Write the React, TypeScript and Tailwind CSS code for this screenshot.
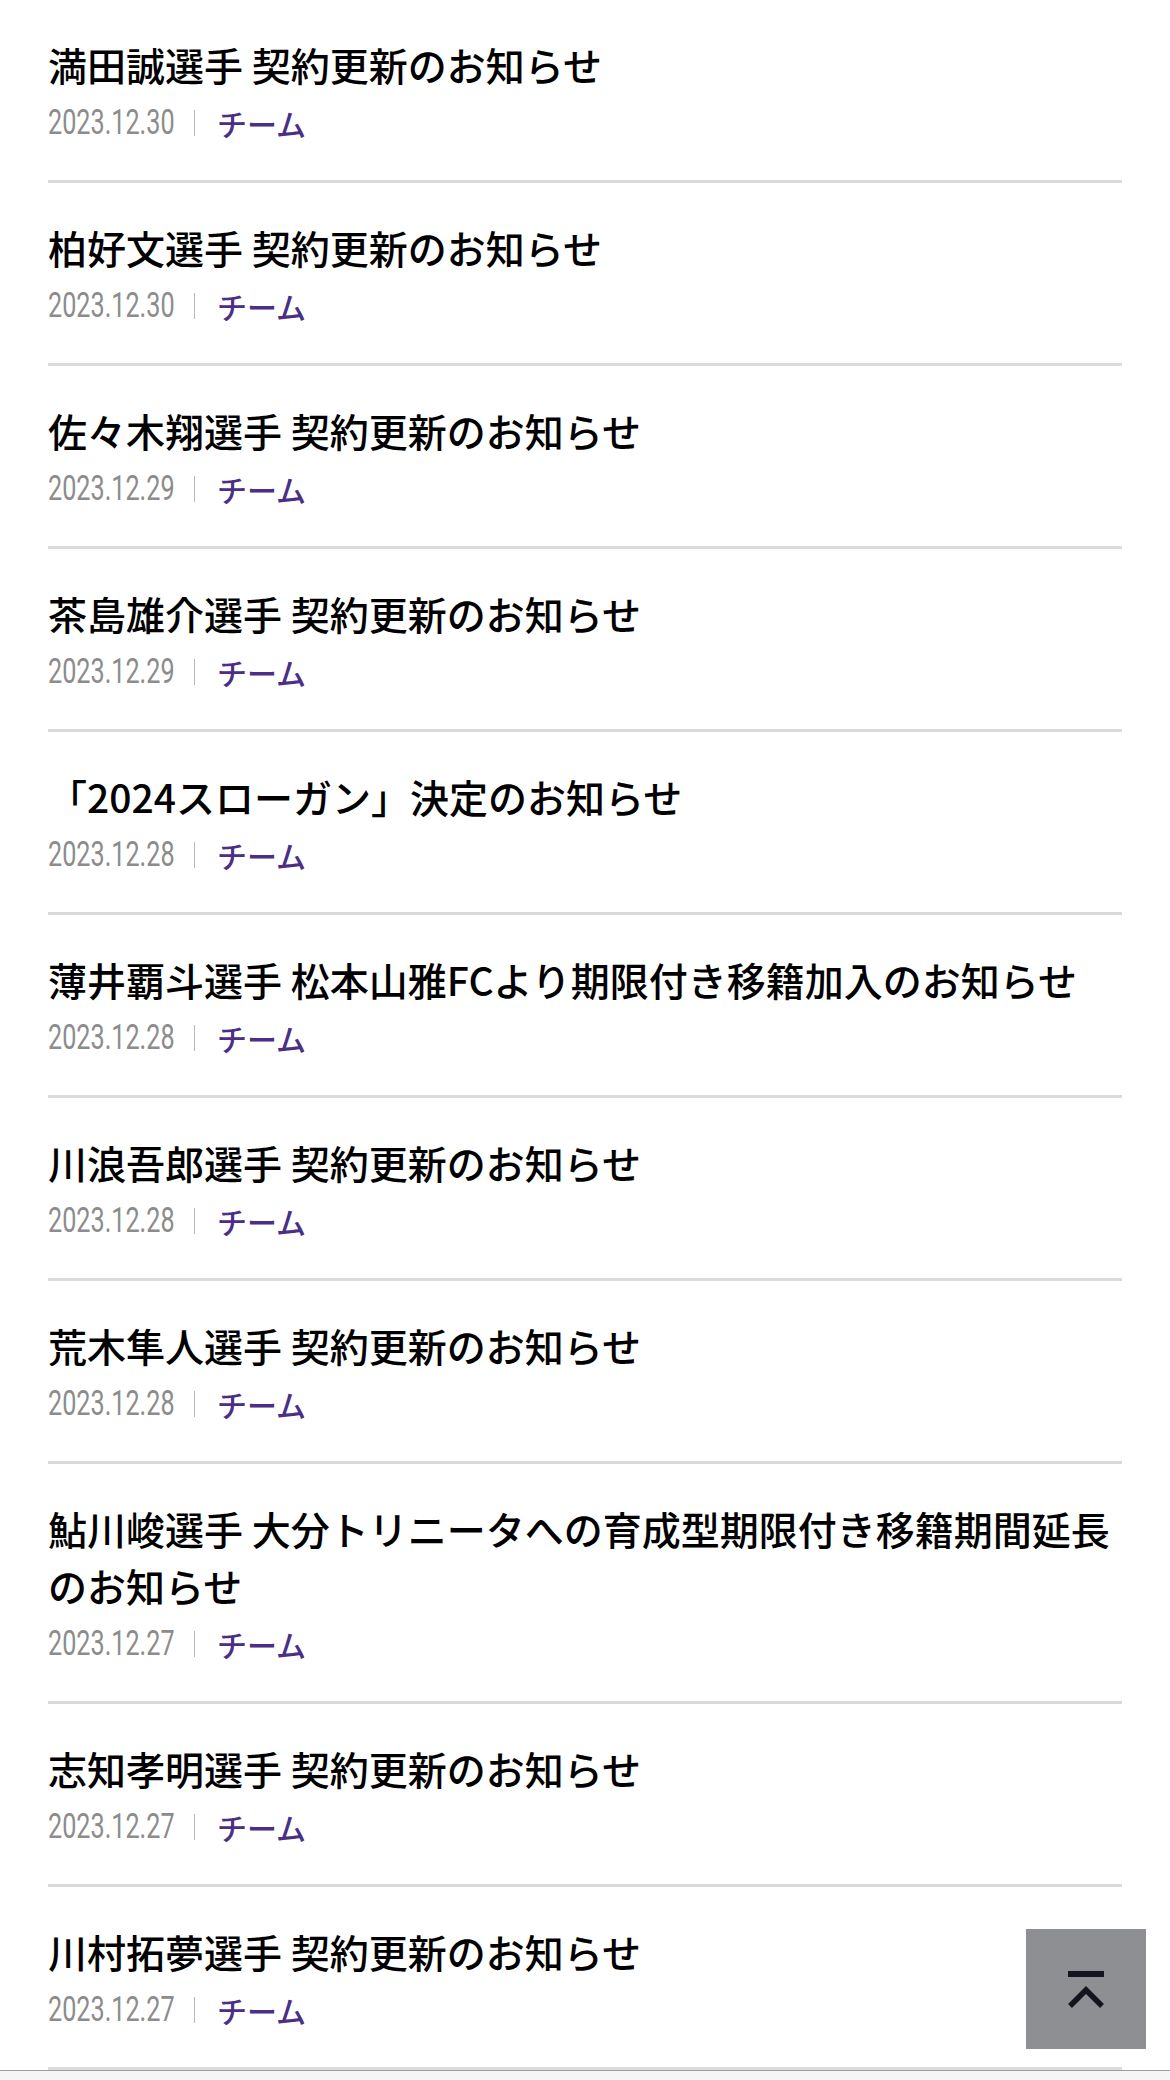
const news = [
  { title: "満田誠選手 契約更新のお知らせ", date: "2023.12.30" },
  { title: "柏好文選手 契約更新のお知らせ", date: "2023.12.30" },
  { title: "佐々木翔選手 契約更新のお知らせ", date: "2023.12.29" },
  { title: "茶島雄介選手 契約更新のお知らせ", date: "2023.12.29" },
  { title: "「2024スローガン」決定のお知らせ", date: "2023.12.28" },
  { title: "薄井覇斗選手 松本山雅FCより期限付き移籍加入のお知らせ", date: "2023.12.28" },
  { title: "川浪吾郎選手 契約更新のお知らせ", date: "2023.12.28" },
  { title: "荒木隼人選手 契約更新のお知らせ", date: "2023.12.28" },
  { title: "鮎川峻選手 大分トリニータへの育成型期限付き移籍期間延長のお知らせ", date: "2023.12.27" },
  { title: "志知孝明選手 契約更新のお知らせ", date: "2023.12.27" },
  { title: "川村拓夢選手 契約更新のお知らせ", date: "2023.12.27" },
]

const jp = "font-['Noto_Sans_CJK_JP','Noto_Sans',sans-serif]"

function NewsItem({ title, date }: { title: string; date: string }) {
  return (
    <li className="border-b-[3px] border-[#dadada] pt-[36px] pb-[36px]">
      <a href="#" className="block">
        <p className={`${jp} text-[39px] leading-[57px] font-medium text-black`}>{title}</p>
        <div className="mt-[9px] flex h-[42px] items-center">
          <span className="inline-block w-[124px] whitespace-nowrap">
            <span className="inline-block origin-left scale-x-[0.72] font-['Roboto',sans-serif] text-[35px] leading-[42px] font-normal text-[#8c8c8c]">
              {date}
            </span>
          </span>
          <span className="mx-[22px] h-[26px] w-px bg-[#b8b8b8]" />
          <span className={`${jp} text-[30px] leading-[42px] font-medium text-[#4b2f86]`}>チーム</span>
        </div>
      </a>
    </li>
  )
}

export default function App() {
  return (
    <div className="min-h-screen bg-white">
      <main className="pl-[48px] pr-[48px]">
        <ul>
          {news.map((n, i) => (
            <NewsItem key={i} title={n.title} date={n.date} />
          ))}
        </ul>
      </main>
      <footer className="h-[200px] border-t border-[#9c9c9c] bg-[#f5f5f5]" />

      <button
        aria-label="ページトップへ"
        className="fixed right-[24px] bottom-[31px] flex h-[120px] w-[120px] items-center justify-center bg-[#8e8f93]"
      >
        <svg width="36" height="37" viewBox="0 0 36 37" fill="none">
          <rect x="0" y="0" width="36" height="6" fill="#15131d" />
          <polyline points="2,35 18,19 34,35" stroke="#15131d" strokeWidth="5.5" fill="none" />
        </svg>
      </button>
    </div>
  )
}
